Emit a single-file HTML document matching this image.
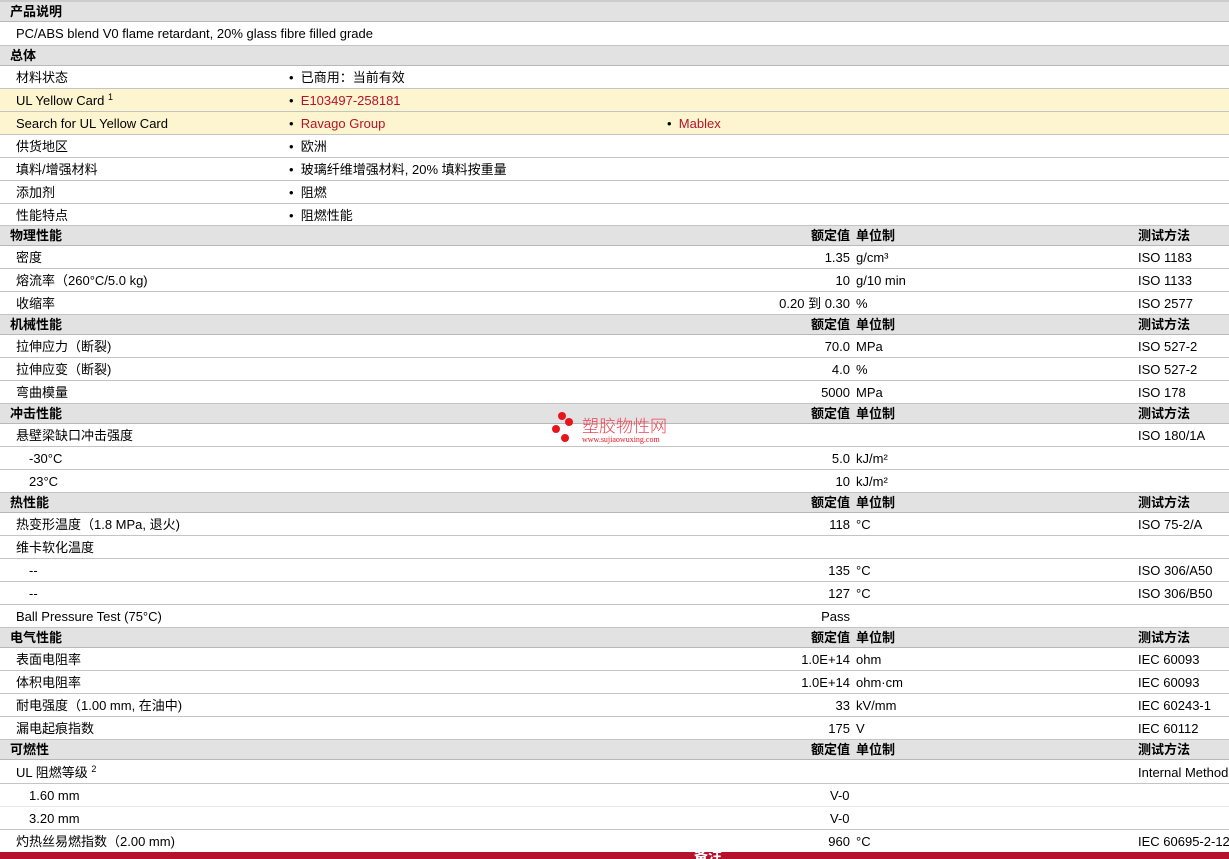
<!DOCTYPE html>
<html><head><meta charset="utf-8"><style>
body{margin:0;width:1229px;height:859px;overflow:hidden;background:#fff;font-family:"Liberation Sans","Noto Sans CJK SC",sans-serif;font-size:13px;color:#000;position:relative}
.r{position:absolute;left:0;width:1229px;border-bottom:1px solid #c4c4c4;box-sizing:border-box}
.h{background:#e2e2e2;font-weight:bold;height:20px;border-bottom:1px solid #b8b8b8}
.d{height:23px}
.y{background:#fdf5cf}
.r span{position:absolute;white-space:nowrap;line-height:15px;height:15px}
.h span{top:2px}
.d span{top:4px}
.l{left:16px}.li{left:29px}.hl{left:10px}
.v{right:379px;text-align:right}
.u{left:856px}.t{left:1138px}
.b{left:289px}.b2{left:667px}
.red{color:#b5122b;font-weight:normal}
sup{font-size:9px;line-height:0;vertical-align:5px}
</style></head><body>
<div class="r" style="top:0;height:2px;background:#ccc;border:0"></div>
<div class="r h" style="top:2px"><span class="hl">产品说明</span></div>
<div class="r d" style="top:22px;height:24px"><span class="l">PC/ABS blend V0 flame retardant, 20% glass fibre filled grade</span></div>
<div class="r h" style="top:46px"><span class="hl">总体</span></div>
<div class="r d" style="top:66px"><span class="l">材料状态</span><span class="b">•&nbsp;&nbsp;已商用：当前有效</span></div>
<div class="r d y" style="top:89px"><span class="l">UL Yellow Card <sup>1</sup></span><span class="b">•&nbsp;&nbsp;<b class="red">E103497-258181</b></span></div>
<div class="r d y" style="top:112px"><span class="l">Search for UL Yellow Card</span><span class="b">•&nbsp;&nbsp;<b class="red">Ravago Group</b></span><span class="b2">•&nbsp;&nbsp;<b class="red">Mablex</b></span></div>
<div class="r d" style="top:135px"><span class="l">供货地区</span><span class="b">•&nbsp;&nbsp;欧洲</span></div>
<div class="r d" style="top:158px"><span class="l">填料/增强材料</span><span class="b">•&nbsp;&nbsp;玻璃纤维增强材料, 20% 填料按重量</span></div>
<div class="r d" style="top:181px"><span class="l">添加剂</span><span class="b">•&nbsp;&nbsp;阻燃</span></div>
<div class="r d" style="top:204px;height:22px"><span class="l">性能特点</span><span class="b">•&nbsp;&nbsp;阻燃性能</span></div>

<div class="r h" style="top:226px"><span class="hl">物理性能</span><span class="v">额定值</span><span class="u">单位制</span><span class="t">测试方法</span></div>
<div class="r d" style="top:246px"><span class="l">密度</span><span class="v">1.35</span><span class="u">g/cm³</span><span class="t">ISO 1183</span></div>
<div class="r d" style="top:269px"><span class="l">熔流率（260°C/5.0 kg)</span><span class="v">10</span><span class="u">g/10 min</span><span class="t">ISO 1133</span></div>
<div class="r d" style="top:292px"><span class="l">收缩率</span><span class="v">0.20 到 0.30</span><span class="u">%</span><span class="t">ISO 2577</span></div>

<div class="r h" style="top:315px"><span class="hl">机械性能</span><span class="v">额定值</span><span class="u">单位制</span><span class="t">测试方法</span></div>
<div class="r d" style="top:335px"><span class="l">拉伸应力（断裂)</span><span class="v">70.0</span><span class="u">MPa</span><span class="t">ISO 527-2</span></div>
<div class="r d" style="top:358px"><span class="l">拉伸应变（断裂)</span><span class="v">4.0</span><span class="u">%</span><span class="t">ISO 527-2</span></div>
<div class="r d" style="top:381px"><span class="l">弯曲模量</span><span class="v">5000</span><span class="u">MPa</span><span class="t">ISO 178</span></div>

<div class="r h" style="top:404px"><span class="hl">冲击性能</span><span class="v">额定值</span><span class="u">单位制</span><span class="t">测试方法</span></div>
<div class="r d" style="top:424px"><span class="l">悬壁梁缺口冲击强度</span><span class="t">ISO 180/1A</span></div>
<div class="r d" style="top:447px"><span class="li">-30°C</span><span class="v">5.0</span><span class="u">kJ/m²</span></div>
<div class="r d" style="top:470px"><span class="li">23°C</span><span class="v">10</span><span class="u">kJ/m²</span></div>

<div class="r h" style="top:493px"><span class="hl">热性能</span><span class="v">额定值</span><span class="u">单位制</span><span class="t">测试方法</span></div>
<div class="r d" style="top:513px"><span class="l">热变形温度（1.8 MPa, 退火)</span><span class="v">118</span><span class="u">°C</span><span class="t">ISO 75-2/A</span></div>
<div class="r d" style="top:536px"><span class="l">维卡软化温度</span></div>
<div class="r d" style="top:559px"><span class="li">--</span><span class="v">135</span><span class="u">°C</span><span class="t">ISO 306/A50</span></div>
<div class="r d" style="top:582px"><span class="li">--</span><span class="v">127</span><span class="u">°C</span><span class="t">ISO 306/B50</span></div>
<div class="r d" style="top:605px"><span class="l">Ball Pressure Test (75°C)</span><span class="v">Pass</span></div>

<div class="r h" style="top:628px"><span class="hl">电气性能</span><span class="v">额定值</span><span class="u">单位制</span><span class="t">测试方法</span></div>
<div class="r d" style="top:648px"><span class="l">表面电阻率</span><span class="v">1.0E+14</span><span class="u">ohm</span><span class="t">IEC 60093</span></div>
<div class="r d" style="top:671px"><span class="l">体积电阻率</span><span class="v">1.0E+14</span><span class="u">ohm·cm</span><span class="t">IEC 60093</span></div>
<div class="r d" style="top:694px"><span class="l">耐电强度（1.00 mm, 在油中)</span><span class="v">33</span><span class="u">kV/mm</span><span class="t">IEC 60243-1</span></div>
<div class="r d" style="top:717px"><span class="l">漏电起痕指数</span><span class="v">175</span><span class="u">V</span><span class="t">IEC 60112</span></div>

<div class="r h" style="top:740px"><span class="hl">可燃性</span><span class="v">额定值</span><span class="u">单位制</span><span class="t">测试方法</span></div>
<div class="r d" style="top:760px;height:24px"><span class="l" style="top:5px">UL 阻燃等级 <sup>2</sup></span><span class="t" style="top:5px">Internal Method</span></div>
<div class="r d" style="top:784px;border-color:#e6e6e6"><span class="li">1.60 mm</span><span style="left:830px">V-0</span></div>
<div class="r d" style="top:807px"><span class="li">3.20 mm</span><span style="left:830px">V-0</span></div>
<div class="r d" style="top:830px;height:22px;border:0"><span class="l">灼热丝易燃指数（2.00 mm)</span><span class="v">960</span><span class="u">°C</span><span class="t">IEC 60695-2-12</span></div>
<div style="position:absolute;top:852px;left:0;width:1229px;height:7px;background:#b5122b;overflow:hidden"><span style="position:absolute;left:694px;top:-6px;color:#fff;font-weight:bold;font-size:14px">备注</span></div>

<div style="position:absolute;left:552px;top:412px">
<div style="position:absolute;left:6px;top:0;width:8px;height:8px;border-radius:50%;background:#e8141c"></div>
<div style="position:absolute;left:13px;top:6px;width:8px;height:8px;border-radius:50%;background:#e8141c"></div>
<div style="position:absolute;left:0;top:13px;width:8px;height:8px;border-radius:50%;background:#e8141c"></div>
<div style="position:absolute;left:9px;top:22px;width:8px;height:8px;border-radius:50%;background:#e8141c"></div>
<div style="position:absolute;left:30px;top:3px;line-height:20px;color:#ee4050;font-size:17px;white-space:nowrap;font-family:'Noto Sans CJK SC',sans-serif;font-weight:300">塑胶物性网</div>
<div style="position:absolute;left:30px;top:23px;line-height:9px;color:#e8141c;font-size:8px;white-space:nowrap;font-family:'Liberation Serif',serif">www.sujiaowuxing.com</div>
</div>
</body></html>
